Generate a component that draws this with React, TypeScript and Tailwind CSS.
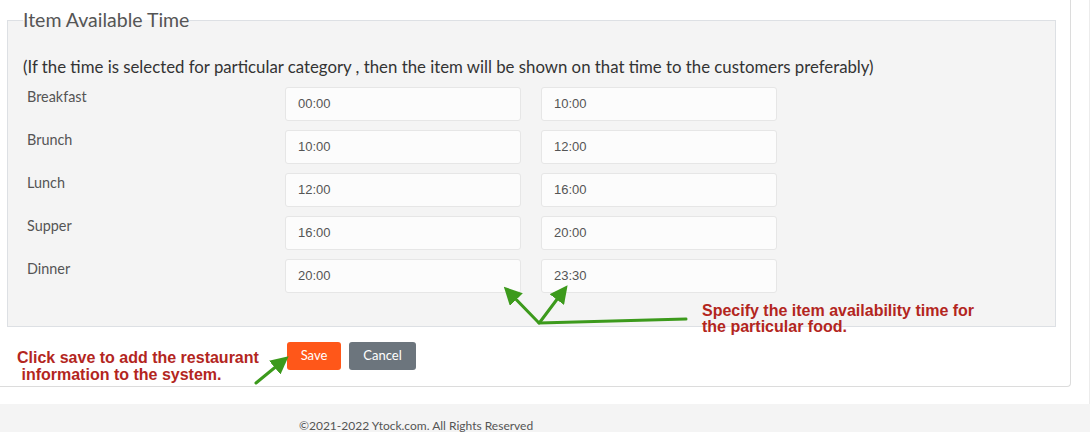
import React from 'react';

const slots = [
  { label: 'Breakfast', from: '00:00', to: '10:00' },
  { label: 'Brunch', from: '10:00', to: '12:00' },
  { label: 'Lunch', from: '12:00', to: '16:00' },
  { label: 'Supper', from: '16:00', to: '20:00' },
  { label: 'Dinner', from: '20:00', to: '23:30' },
];

const TimeBox = ({ value }: { value: string }) => (
  <div className="w-[236px] h-[34px] bg-[#fcfcfc] border border-[#e6e6e6] rounded-[3px] flex items-center pl-[12px] text-[13px] text-[#555] font-['Liberation_Sans',sans-serif]">
    {value}
  </div>
);

const Arrows = () => (
  <svg className="absolute inset-0 pointer-events-none" width="1090" height="432" viewBox="0 0 1090 432">
    <defs>
      <marker id="head" markerWidth="6" markerHeight="6" refX="4" refY="3" orient="auto" markerUnits="strokeWidth">
        <path d="M0,0 L6,3 L0,6 Z" fill="#3c9a1c" />
      </marker>
    </defs>
    <g stroke="#3c9a1c" strokeWidth="3" fill="none" strokeLinecap="round">
      <line x1="686" y1="319" x2="539" y2="323" />
      <line x1="539" y1="323" x2="508" y2="291" markerEnd="url(#head)" />
      <line x1="540" y1="322" x2="564" y2="290" markerEnd="url(#head)" />
      <line x1="256" y1="383" x2="284" y2="360" markerEnd="url(#head)" />
    </g>
  </svg>
);

const App: React.FC = () => {
  return (
    <div className="relative w-[1090px] h-[432px] bg-white overflow-hidden font-['Lato',sans-serif]">
      <div className="w-[1090px] border-r border-[#ececec]">
        <div className="w-[1071px] border-r border-b border-[#dcdcdc] rounded-br-[4px] pt-[8px] pb-[16px]">
          <fieldset className="ml-[7px] w-[1049px] border border-[#dde0e4] bg-[#f4f4f4] pb-[33px]">
            <legend className="ml-[15px] text-[19.5px] leading-[24px] text-[#555]">Item Available Time</legend>
            <p className="mt-[24px] ml-[15px] text-[16.8px] leading-[22px] text-[#333]">
              (If the time is selected for particular category , then the item will be shown on that time to the customers preferably)
            </p>
            <div className="mt-[9px] flex flex-col gap-[9px]">
              {slots.map((s) => (
                <div key={s.label} className="flex h-[34px]">
                  <div className="w-[277px] pl-[19px] text-[14.4px] leading-[20px] text-[#555]">{s.label}</div>
                  <div className="flex gap-[20px]">
                    <TimeBox value={s.from} />
                    <TimeBox value={s.to} />
                  </div>
                </div>
              ))}
            </div>
          </fieldset>
          <div className="flex gap-[8px] ml-[287px] mt-[15px]">
            <button className="w-[54px] h-[28px] rounded-[3px] bg-[#ff5719] text-white text-[13px]">Save</button>
            <button className="w-[67px] h-[28px] rounded-[3px] bg-[#6c757d] text-white text-[13px]">Cancel</button>
          </div>
        </div>
        <div className="h-[17px]" />
      </div>
      <div className="h-[30px] bg-[#f4f4f4] pl-[299px] pt-[14px] text-[12px] leading-[16px] text-[#555]">
        ©2021-2022 Ytock.com. All Rights Reserved
      </div>

      <div className="absolute left-[17px] top-[349px] text-[16px] leading-[17px] font-bold text-[#b3261e] font-['Liberation_Sans',sans-serif] whitespace-pre">
        {'Click save to add the restaurant\n information to the system.'}
      </div>
      <div className="absolute left-[702px] top-[303px] text-[16px] leading-[16px] font-bold text-[#b3261e] font-['Liberation_Sans',sans-serif] whitespace-pre">
        {'Specify the item availability time for\nthe particular food.'}
      </div>
      <Arrows />
    </div>
  );
};

export default App;
